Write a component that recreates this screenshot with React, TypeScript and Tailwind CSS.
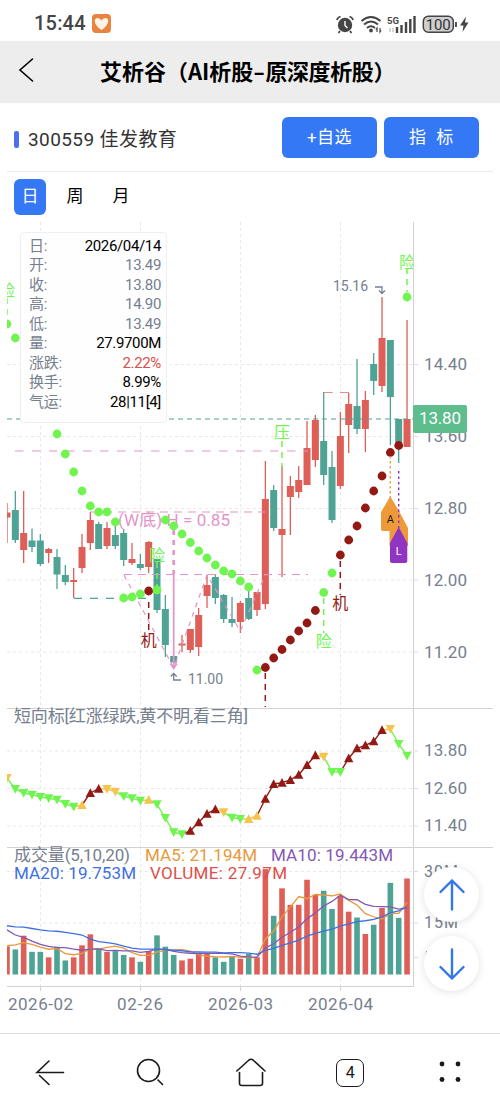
import type { ReactNode } from "react";

type Candle = { up: boolean; high: number; top: number; bottom: number; low: number; volume: number };
type Row = [string, number, number, number, number, number];

const UP = "#dd5f58";
const DOWN = "#4fa394";
const LIME = "#70f550";
const DARK = "#931a14";
const YELLOW = "#f5c44f";
const PINK = "#e394c8";
const GRAY = "#76808f";

const rows: Row[] = [
  ["u", 503, 512.5, 517.5, 543, 8.2],
  ["d", 491, 510, 540, 543, 7.3],
  ["u", 491, 533, 550, 563, 11.3],
  ["d", 528.5, 540.5, 547, 552, 6.6],
  ["d", 534, 540.5, 564, 566, 6.6],
  ["u", 548, 549, 553, 563, 5],
  ["d", 549, 557, 574.5, 589, 8.1],
  ["d", 565, 575, 582, 585, 4.1],
  ["u", 568, 580, 582, 598, 5],
  ["u", 534, 547, 568, 573, 8.5],
  ["u", 512, 520, 543, 550, 11.7],
  ["d", 522, 524, 549, 549, 7.6],
  ["u", 522, 528, 546, 549, 6.6],
  ["d", 524, 535, 546, 549, 6.8],
  ["d", 529, 533, 560, 566, 5.7],
  ["u", 543, 559, 563, 565, 5],
  ["d", 554, 564, 568, 570, 3.7],
  ["u", 541, 542, 567, 573, 6.8],
  ["d", 559, 559, 610, 613, 11.4],
  ["d", 595, 609, 645, 657, 8.1],
  ["d", 656, 656, 662.5, 668, 5.7],
  ["u", 635, 643.5, 645.5, 652, 4.1],
  ["u", 629, 629, 650, 653, 4.6],
  ["u", 608, 615, 647, 656, 6.1],
  ["u", 575, 585, 596, 608, 6.1],
  ["d", 574, 577, 598, 604, 5],
  ["d", 594, 595, 619, 623, 3.7],
  ["d", 597, 619, 623, 627, 5.4],
  ["u", 601, 603, 622, 633, 4.6],
  ["d", 589, 598, 619, 620, 6],
  ["u", 592, 592, 610, 616, 5],
  ["u", 461, 499, 604, 609, 30.7],
  ["d", 485, 490, 528, 531, 17.1],
  ["u", 466, 529, 535, 577, 25.1],
  ["u", 476, 486, 497, 535, 20.3],
  ["u", 466, 480, 492, 498, 20.3],
  ["u", 421, 448, 485, 485, 27.6],
  ["u", 415, 420, 460, 467, 23.2],
  ["d", 392, 441, 475, 485, 24.4],
  ["d", 451, 467, 520, 523, 19.1],
  ["u", 412, 436, 486, 489, 22.9],
  ["u", 393, 404, 425, 453, 18.3],
  ["d", 359, 406, 429, 434, 16.6],
  ["u", 391, 400, 429, 452, 11.8],
  ["d", 353, 364, 381, 395, 14.5],
  ["u", 297, 338, 386, 392, 19.4],
  ["d", 340, 340, 397, 445, 26.7],
  ["d", 419, 419, 447, 463, 16.5],
  ["u", 320, 419, 447, 447, 27.97],
];

const candles: Candle[] = rows.map(([dir, high, top, bottom, low, volume]) => ({
  up: dir === "u",
  high,
  top,
  bottom,
  low,
  volume,
}));

// [index, y, color] of the stop dots
const dots: [number, number, string][] = [
  [0, 324, LIME], [1, 338, LIME], [6, 434, LIME], [7, 454, LIME], [8, 472, LIME], [9, 491, LIME],
  [10, 506, LIME], [11, 512, LIME], [12, 512, LIME], [13, 522, LIME], [14, 598, LIME], [15, 597, LIME],
  [16, 594, LIME], [17, 591, DARK], [18, 590, LIME], [19, 520, LIME], [20, 526, LIME], [21, 534, LIME],
  [22, 542.5, LIME], [23, 551, LIME], [24, 558, LIME], [25, 565, LIME], [26, 571, LIME], [27, 574, LIME],
  [28, 581, LIME], [29, 587, LIME], [30, 670, LIME], [31, 667.5, DARK], [32, 658, DARK], [33, 649.5, DARK],
  [34, 640, DARK], [35, 631, DARK], [36, 623, DARK], [37, 610.5, DARK], [38, 592.5, LIME], [39, 573, LIME],
  [40, 555, DARK], [41, 540, DARK], [42, 526, DARK], [43, 508, DARK], [44, 491, DARK], [45, 476, DARK],
  [46, 452.5, DARK], [47, 445.5, DARK], [48, 297, LIME],
];

// g = falling, r = rising, y / Y = unclear, pointing down / up
const trendKinds = "yggggggggYrryygggYggggrrrryggYYrrrrrrryggrrrrrygg";
const trendY = [
  778, 789, 793, 794.7, 797, 798.3, 799.7, 804, 806.7, 805, 793, 788.7, 789, 791.7, 796.3, 798.3, 800.7,
  799.7, 804.3, 818, 832.3, 834.3, 830.7, 822.3, 813.7, 809.3, 812.3, 817.7, 819, 819, 815.7, 798.7, 784,
  782.7, 780, 774.7, 765, 755.3, 756.7, 772, 772, 758.3, 748.3, 745.3, 741.3, 730, 729, 744, 755.7,
];

const px = (i: number) => 7 + i * 8.334;
const volY = (v: number) => 974.5 - v * 3.433;

function movingAverage(size: number, seed: number[]) {
  return candles
    .map((_, i) => {
      const value =
        i < seed.length
          ? seed[i]
          : candles.slice(i - size + 1, i + 1).reduce((sum, c) => sum + c.volume, 0) / size;
      return `${px(i)},${volY(value)}`;
    })
    .join(" ");
}

const averages = [
  { color: "#e8993a", points: movingAverage(5, [8.4, 8.6, 9.3, 8.8]) },
  { color: "#8458b3", points: movingAverage(10, [13, 11.5, 10.8, 9.7, 8.8, 8.2, 7.8, 7.8, 7.4]) },
  {
    color: "#3f70e0",
    points: movingAverage(20, [
      14.2, 13.9, 13.8, 13.4, 13, 12.7, 12.6, 12.3, 11.9, 11.5, 10.3, 9.6, 9.3, 8.9, 8.3, 7.7, 7.4, 7.4, 7.4,
    ]),
  },
];

const quote = [
  { label: "日:", value: "2026/04/14", color: "text-black" },
  { label: "开:", value: "13.49", color: "text-[#76808f]" },
  { label: "收:", value: "13.80", color: "text-[#76808f]" },
  { label: "高:", value: "14.90", color: "text-[#76808f]" },
  { label: "低:", value: "13.49", color: "text-[#76808f]" },
  { label: "量:", value: "27.9700M", color: "text-black" },
  { label: "涨跌:", value: "2.22%", color: "text-[#dd4f48]" },
  { label: "换手:", value: "8.99%", color: "text-black" },
  { label: "气运:", value: "28|11[4]", color: "text-black" },
];

type LabelProps = { x: number; y: number; w?: number; size?: number; color?: string; middle?: boolean; children: ReactNode };

function Label({ x, y, w, size = 17, color = GRAY, middle = false, children }: LabelProps) {
  return (
    <text
      x={x}
      y={y}
      dy=".36em"
      fontSize={size}
      fill={color}
      textLength={w}
      textAnchor={middle ? "middle" : "start"}
    >
      {children}
    </text>
  );
}

function Grid() {
  return (
    <g stroke="#e8e8e8" fill="none">
      <g strokeDasharray="3 3">
        {[364.5, 436.5, 508.5, 580, 652, 751, 788.5, 826, 871.5, 923].map((y) => (
          <path key={y} d={`M7 ${y}H413`} />
        ))}
        {[40.5, 140.5, 240.5, 340.5].map((x) => (
          <path key={x} d={`M${x} 222V986`} />
        ))}
      </g>
      <path
        stroke="#d2d2d2"
        d="M7 708.5H493M7 847.5H493M7 986.5H413.5M413.5 222V986.5M40.5 986v5M140.5 986v5M240.5 986v5M340.5 986v5"
      />
      <path
        stroke="#dcdcdc"
        d="M413 364.5h5M413 436.5h5M413 508.5h5M413 580h5M413 652h5M413 751h5M413 788.5h5M413 826h5M413 871.5h5M413 923h5M413 957.5h5"
      />
    </g>
  );
}

function TrendLine() {
  const color = (i: number) => (trendKinds[i] === "g" ? LIME : trendKinds[i] === "r" ? DARK : YELLOW);
  return (
    <g>
      {trendY.slice(1).map((y, i) => (
        <line key={i} x1={px(i)} y1={trendY[i]} x2={px(i + 1)} y2={y} stroke={color(i + 1)} strokeWidth={1.4} />
      ))}
      {trendY.map((y, i) => {
        const pointsUp = trendKinds[i] === "r" || trendKinds[i] === "Y";
        return (
          <path
            key={i}
            fill={color(i)}
            d={pointsUp ? `M${px(i) - 4.7} ${y + 4}h9.4l-4.7-8.8z` : `M${px(i) - 4.7} ${y - 4}h9.4l-4.7 8.8z`}
          />
        );
      })}
    </g>
  );
}

function Chart() {
  return (
    <svg className="block h-[811px] w-[500px]" viewBox="0 222 500 811">
      <clipPath id="plot">
        <rect x="7" y="222" width="406" height="765" />
      </clipPath>
      <Grid />
      <g clipPath="url(#plot)">
        {candles.map((c, i) => (
          <g key={i} fill={c.up ? UP : DOWN}>
            <rect x={px(i) - 0.65} y={c.high} width={1.3} height={c.low - c.high} />
            <rect x={px(i) - 3.5} y={c.top} width={7} height={c.bottom - c.top} />
            <rect x={px(i) - 2.8} y={volY(c.volume)} width={5.6} height={c.volume * 3.433} />
          </g>
        ))}
        <path d="M7 419H413" stroke={DOWN} strokeWidth="1.2" strokeDasharray="5 4" />

        {/* W bottom pattern */}
        <g fill="none" stroke={PINK} strokeWidth="1.2">
          <path d="M15 451H308" strokeDasharray="8.5 8.5" />
          <path d="M90 512H265M124 574.5H308" strokeDasharray="8 6" />
          <path d="M323.7 392.5h9M340 392.5h9" stroke={UP} strokeOpacity=".7" />
          <path d="M124 575L173.7 668L207 575L240.3 631L265.3 575" strokeDasharray="5 5" />
          <path d="M173.7 530V574" strokeWidth="2.6" strokeDasharray="5 5" />
          <path d="M173.7 574V667M170.5 663.5l3.2 5l3.2-5" strokeWidth="1.7" />
        </g>
        <Label x={118} y={520} w={112} size={17} color={PINK}>(W底) H = 0.85</Label>
        <path d="M74 598.3H149" stroke={DOWN} strokeWidth="1.2" strokeDasharray="8 8" />

        {dots.map(([i, y, color]) => (
          <circle key={i} cx={px(i)} cy={y} r={4.4} fill={color} />
        ))}

        <g fill="none" strokeWidth="1.5" strokeDasharray="6 5">
          <path d="M7 298V318M157 562V588M282 441V467M323.7 598V633M407 268V292" stroke={LIME} />
          <path d="M148.7 602V630M265.3 673V707M340.3 561V595" stroke={DARK} />
        </g>
        <Label x={7} y={290} size={16} color={LIME} middle>险</Label>
        <Label x={157} y={555} size={16} color={LIME} middle>险</Label>
        <Label x={282} y={432.5} size={16} color={LIME} middle>压</Label>
        <Label x={323.7} y={641.5} size={16} color={LIME} middle>险</Label>
        <Label x={407} y={262} size={16} color={LIME} middle>险</Label>
        <Label x={148.7} y={640} size={16} color={DARK} middle>机</Label>
        <Label x={340.3} y={603.5} size={16} color={DARK} middle>机</Label>

        {/* Signal markers */}
        <path d="M390.3 456V498" stroke="#ee9a3a" strokeWidth="1.3" strokeDasharray="2.5 2.5" />
        <path d="M390.3 496.5L399 511L408 528V546H389.5V531H383q-2 0-2-2V512z" fill="#ee9a3a" />
        <path d="M398.7 471V528" stroke="#8a33bd" strokeWidth="1.4" strokeDasharray="2.5 3" />
        <path d="M398.7 527L407.3 543V561q0 2-2 2H392q-2 0-2-2V543z" fill="#8f35c2" />
        <Label x={390.3} y={519} size={11} color="#1a1a1a" middle>A</Label>
        <Label x={398.7} y={551.5} size={11} color="#fff" middle>L</Label>
        {averages.map((ma) => (
          <polyline key={ma.color} points={ma.points} fill="none" stroke={ma.color} strokeWidth="1.3" />
        ))}
        <TrendLine />
      </g>

      {/* Extremes */}
      <g fill="none" stroke={GRAY} strokeWidth="1.3">
        <path d="M375 287h7v6.5M379 290.5l3 3l3-3" />
        <path d="M181 680h-7.3v-6.5M170.7 676.5l3-3l3 3" />
      </g>
      <Label x={333} y={286} w={35} size={14}>15.16</Label>
      <Label x={188} y={679} w={35} size={14}>11.00</Label>

      <Label x={424} y={364} w={43}>14.40</Label>
      <Label x={424} y={436} w={43}>13.60</Label>
      <Label x={424} y={508} w={43}>12.80</Label>
      <Label x={424} y={579.5} w={43}>12.00</Label>
      <Label x={424} y={651.5} w={43}>11.20</Label>
      <rect x="413" y="405" width="54" height="28" rx="2" fill="#5dbd8c" />
      <Label x={419} y={418} w={42} color="#fff">13.80</Label>
      <Label x={424} y={750} w={43}>13.80</Label>
      <Label x={424} y={787.5} w={43}>12.60</Label>
      <Label x={424} y={825} w={43}>11.40</Label>
      <Label x={424} y={871} w={34} size={16}>30M</Label>
      <Label x={424} y={922.5} w={34} size={16}>15M</Label>
      <Label x={424} y={957} w={24} size={16}>5M</Label>

      <Label x={14} y={716} w={234}>短向标[红涨绿跌,黄不明,看三角]</Label>
      <Label x={14} y={855} w={116}>成交量(5,10,20)</Label>
      <Label x={145} y={855} w={112} color="#e8993a">MA5: 21.194M</Label>
      <Label x={271} y={855} w={122} color="#8458b3">MA10: 19.443M</Label>
      <Label x={14} y={872.5} w={122} color="#3f70e0">MA20: 19.753M</Label>
      <Label x={150} y={872.5} w={137} color="#dd4f48">VOLUME: 27.97M</Label>

      <Label x={8} y={1003.5} w={65}>2026-02</Label>
      <Label x={117} y={1003.5} w={46}>02-26</Label>
      <Label x={208} y={1003.5} w={65}>2026-03</Label>
      <Label x={308} y={1003.5} w={65}>2026-04</Label>
    </svg>
  );
}

function StatusBar() {
  return (
    <div className="flex h-[41px] items-end justify-between pr-[31px] pb-[6px] pl-[34px] text-[#454545]">
      <div className="flex items-center gap-[6px]">
        <span className="text-[20px] leading-[24px] font-medium tracking-[0.2px]">15:44</span>
        <svg width="19" height="19" viewBox="0 0 19 19">
          <rect width="19" height="19" rx="4" fill="#e8843f" />
          <path d="M9.5 16C1 10.5 1.500 4 5.700 4Q8.300 4 9.500 6.500Q10.700 4 13.300 4C17.500 4 18 10.500 9.500 16z" fill="#fff3e6" />
        </svg>
      </div>
      <svg width="134" height="22" viewBox="335 12 134 22" fill="none" stroke="#454545">
        <circle cx="345" cy="24" r="7.2" fill="#454545" stroke="none" />
        <path d="M337 19q.5-2.5 3.5-3.500M353 19q-.5-2.5-3.5-3.500M340 30l-1.500 2M350 30l1.500 2" strokeWidth="1.8" />
        <path d="M345 20v4.500l2.500 2.500" stroke="#fff" strokeWidth="1.4" />
        <path d="M361.500 20q9.500-8 19 0M364 23.500q7-6 14 0M367 27q4-3.500 8 0" strokeWidth="2" />
        <circle cx="371" cy="29.5" r="1.9" fill="#454545" stroke="none" />
        <path d="M377 31v-4l-1.200 1.500M380 27v4l1.200-1.500" strokeWidth="1.2" />
        <text x="387" y="22.8" fontSize="9.5" fontWeight="700" fill="#454545" stroke="none" textLength="12">5G</text>
        <path d="M390 31v-4M393 27v4" stroke="#bbb" strokeWidth="1.2" />
        <path d="M397 32v-6M401.500 32v-8M406 32v-11M410.300 32v-14M414.500 32v-17" strokeWidth="2.4" />
        <rect x="423.300" y="15.2" width="30" height="16" rx="5" fill="#cfcfcf" strokeWidth="1.5" />
        <text x="438.300" y="28.6" fontSize="15" fill="#333" stroke="none" textAnchor="middle" textLength="25">100</text>
        <path d="M456 21v5" strokeWidth="1.8" />
        <path d="M466 15.500l-6 9h3.500l-1 6.500l6-9.500h-3.500z" fill="#454545" stroke="none" />
      </svg>
    </div>
  );
}

function ScrollButton({ down = false }: { down?: boolean }) {
  return (
    <button className="flex size-[55px] items-center justify-center rounded-full bg-white shadow-[0_1px_8px_rgba(0,0,0,0.12)]">
      <svg width="28" height="34" viewBox="0 0 28 34" fill="none" stroke="#3478e8" strokeWidth="2.4" strokeLinecap="round" strokeLinejoin="round">
        {down ? <path d="M14 2.500v29M2.500 20L14 31.500l11.500-11.500" /> : <path d="M14 31.500V2.500M2.500 14L14 2.500l11.500 11.500" />}
      </svg>
    </button>
  );
}

function BottomNav() {
  return (
    <nav className="flex h-[78px] items-center justify-around border-t border-[#dedede] text-[#1a1a1a]">
      <svg width="30" height="30" viewBox="0 0 30 30" fill="none" stroke="currentColor" strokeWidth="1.6" strokeLinecap="round">
        <path d="M28.500 14.500H2L14 3M4.500 17.500L14 26.500" />
      </svg>
      <svg width="30" height="30" viewBox="0 0 30 30" fill="none" stroke="currentColor" strokeWidth="1.6" strokeLinecap="round">
        <circle cx="12.500" cy="12.500" r="11" />
        <path d="M22 22l4.500 4.500" />
      </svg>
      <svg width="30" height="30" viewBox="0 0 30 30" fill="none" stroke="currentColor" strokeWidth="1.6" strokeLinecap="round">
        <path d="M.8 13L13 2q2-1.500 4 0L29 13M3.500 14.500V25.500q0 2 2.500 2H24q2.500 0 2.500-2V14.500" />
      </svg>
      <div className="flex size-[28px] items-center justify-center rounded-[7px] border-[1.500px] border-current text-[16px] leading-none">
        4
      </div>
      <svg width="30" height="30" viewBox="0 0 30 30" fill="currentColor">
        <circle cx="7" cy="6" r="2.4" />
        <circle cx="23" cy="6" r="2.4" />
        <circle cx="7" cy="21.500" r="2.4" />
        <circle cx="23" cy="21.500" r="2.4" />
      </svg>
    </nav>
  );
}

export default function App() {
  return (
    <div className="h-[1111px] w-[500px] overflow-hidden bg-white font-['Roboto','Noto_Sans_CJK_SC',sans-serif]">
      <StatusBar />

      <header className="flex h-[62px] items-center bg-[#ededed] pb-[4px] pl-[18px] text-black">
        <svg width="16" height="26" viewBox="0 0 16 26" fill="none" stroke="currentColor" strokeWidth="1.6" strokeLinecap="round">
          <path d="M14.500 2L2 13L14.500 24" />
        </svg>
        <h1 className="ml-[66px] font-['Noto_Sans_CJK_SC',sans-serif] text-[22px] font-bold whitespace-nowrap">
          艾析谷（AI析股<span className="inline-block w-[12px] scale-x-150 text-center">-</span>
          <span className="tracking-[-0.4px]">原深度析股）</span>
        </h1>
      </header>

      <div className="mx-[7px] flex h-[69px] items-center border-b border-[#ebebeb] pr-[14px] pl-[7px]">
        <span className="mt-1 h-[17px] w-[5px] rounded-[2px] bg-[#4a6ff0]" />
        <span className="mt-[6px] ml-[9px] text-[19px] tracking-[0.4px] text-[#333]">300559 佳发教育</span>
        <div className="ml-auto flex gap-[7px] text-[17px] text-white">
          <button className="h-[41px] w-[95px] rounded-[6px] bg-[#3478f6] pt-px tracking-[0.4px]">+自选</button>
          <button className="h-[41px] w-[95px] rounded-[6px] bg-[#3478f6] pt-px tracking-[0.6px] whitespace-pre">指  标</button>
        </div>
      </div>

      <div className="flex h-[50px] items-center pl-[14px] text-[17px] text-black">
        <button className="h-[36px] w-[32px] rounded-[6px] bg-[#3478f6] text-white">日</button>
        <button className="ml-[20px] w-[18px]">周</button>
        <button className="ml-[28px] w-[18px]">月</button>
      </div>

      <div className="relative">
        <Chart />
        <div className="absolute top-[10px] left-[20px] h-[191px] w-[147px] rounded-[4px] border border-[#f0f0f0] bg-[#fefefe] pt-[3px] pr-[5px] pl-[8px] text-[15px]">
          {quote.map((item) => (
            <div key={item.label} className="flex h-[19.5px] items-center justify-between">
              <span className="tracking-[-0.3px] text-[#76808f]">{item.label}</span>
              <span className={`tracking-[-0.35px] ${item.color}`}>{item.value}</span>
            </div>
          ))}
        </div>
        <div className="absolute top-[645px] left-[424px] flex flex-col gap-[14px]">
          <ScrollButton />
          <ScrollButton down />
        </div>
      </div>

      <BottomNav />
    </div>
  );
}
